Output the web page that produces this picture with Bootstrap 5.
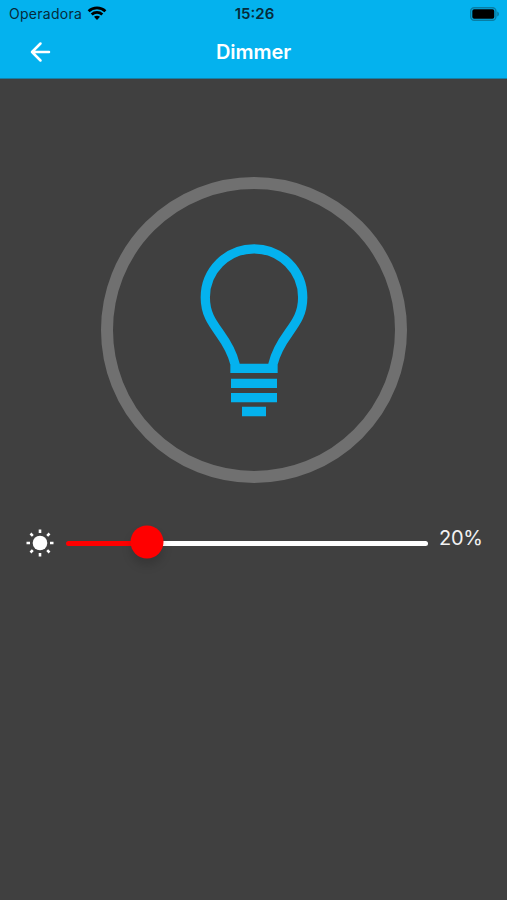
<!DOCTYPE html>
<html lang="pt">
<head>
<meta charset="utf-8">
<meta name="viewport" content="width=device-width, initial-scale=1">
<title>Dimmer</title>
<link href="https://cdn.jsdelivr.net/npm/bootstrap@5.3.0/dist/css/bootstrap.min.css" rel="stylesheet">
<style>
body { background: #404040; font-family: Inter, "Liberation Sans", sans-serif; }
.app-head { background: #04b2ee; height: 79px; border-bottom: 1px solid #167fa6; }
.status { height: 28px; padding: 0 7px 0 9px; color: #062b3a; font-size: 14px; line-height: 28px; }
.status > div { flex: 1 1 0; }
.carrier { letter-spacing: .27px; }
.wifi { margin: -2px 0 0 5px; }
.clock { font-weight: 600; font-size: 15px; letter-spacing: 0; }
.title-row { height: 47px; padding: 0 29px; }
.title-row > * { flex: 1 1 0; }
.title-row h1 { font-size: 20px; font-weight: 600; letter-spacing: -.05px; }
.ring { width: 306px; height: 306px; border: 12px solid #707070; margin-top: 97.5px; }
.control { margin-top: 41.5px; height: 38px; padding: 0 25px 0 26px; }
.track { height: 5px; width: 362px; margin-left: 12px; background: none; border-radius: 3px; overflow: visible; }
.fill { background: #f00; border-radius: 3px 0 0 3px; }
.rest { background: #fff; border-radius: 0 3px 3px 0; }
.knob { width: 33px; height: 33px; background: #f00; top: 1.5px; box-shadow: 0 7px 10px rgba(0,0,0,.15); }
.level { color: #f2f2f2; font-size: 20px; line-height: 24px; letter-spacing: -.3px; margin: -10px 0 0 11px; }
</style>
</head>
<body class="min-vh-100 overflow-hidden">
<header class="app-head">
  <div class="status d-flex">
    <div class="d-flex align-items-center"><span class="carrier">Operadora</span>
      <svg class="wifi" width="20" height="15" viewBox="0 0 20 15" fill="none" stroke="#000" stroke-width="2.8"><path d="M1.6 5.2C6.3.7 13.700.7 18.400 5.200M4.700 8.400c3-2.800 7.600-2.800 10.600 0"/><path d="M7 10.800c1.700-1.500 4.300-1.500 6 0L10 14z" fill="#000" stroke="none"/></svg>
    </div>
    <div class="clock text-center">15:26</div>
    <div class="d-flex justify-content-end align-items-center">
      <svg width="30" height="14" viewBox="0 0 30 14"><rect x=".7" y=".7" width="25.200" height="12.600" rx="3.500" fill="none" stroke="#087da4" stroke-width="1.400"/><rect x="2.300" y="2.300" width="22" height="9.400" rx="1.800"/><path d="M27.200 4.500c2.400 1 2.400 4 0 5z" fill="#087da4"/></svg>
    </div>
  </div>
  <div class="title-row d-flex align-items-center text-white">
    <div class="lh-1"><svg width="22" height="22" viewBox="0 0 22 22" fill="none" stroke="#fff" stroke-width="2.500" stroke-linecap="round" stroke-linejoin="round"><path d="M20 11H3M11.500 2.500L3 11l8.500 8.500"/></svg></div>
    <h1 class="m-0 text-center">Dimmer</h1>
    <div></div>
  </div>
</header>
<main class="d-flex flex-column align-items-center">
  <div class="ring rounded-circle d-flex justify-content-center align-items-center">
    <svg width="110" height="176" viewBox="199 241.500 110 176" fill="none" stroke="#04b2ee" stroke-width="9.300">
      <path d="M235 367.800V363.500C232 351 226 341.500 219.500 332.500C212 322 205.300 313 205.300 297A48.700 48.700 0 0 1 302.700 297C302.700 313 296 322 288.500 332.500C282 341.500 276 351 273 363.500V367.800Z"/>
      <path d="M231 382.800h46M231 397.200h46M242 411h24"/>
    </svg>
  </div>
  <div class="control w-100 d-flex align-items-center">
    <svg class="flex-shrink-0" width="28" height="28" viewBox="-14 -14 28 28" fill="#fff" stroke="#fff" stroke-width="2.600"><circle r="7.300" stroke="none"/><path d="M0-13.500v3.500M0 10v3.500M-13.500 0h3.500M10 0h3.500M-9.500-9.500l2.300 2.300M9.500-9.500L7.200-7.200M-9.500 9.500l2.300-2.300M9.500 9.500L7.200 7.200"/></svg>
    <div class="track progress position-relative flex-shrink-0" role="progressbar" aria-valuenow="20" aria-valuemin="0" aria-valuemax="100">
      <div class="fill" style="width:22.500%"></div>
      <div class="rest flex-grow-1"></div>
      <div class="knob rounded-circle position-absolute translate-middle" style="left:22.500%"></div>
    </div>
    <div class="level">20%</div>
  </div>
</main>
<script src="https://cdn.jsdelivr.net/npm/bootstrap@5.3.0/dist/js/bootstrap.bundle.min.js"></script>
</body>
</html>
